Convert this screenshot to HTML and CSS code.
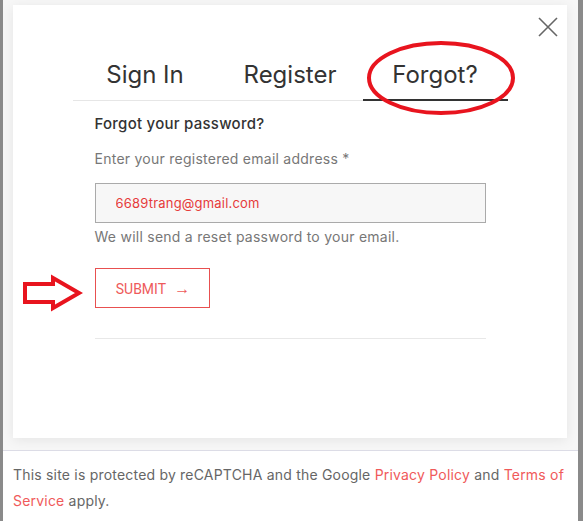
FILE: index.html
```html
<!DOCTYPE html>
<html lang="en">
<head>
  <meta charset="UTF-8">
  <meta name="viewport" content="width=device-width, initial-scale=1.0">
  <title>Forgot password</title>
  <link rel="stylesheet" href="styles.css">
</head>
<body>
  <div class="page">
    <div class="modal">
      <div class="modal-top">
        <button class="close" aria-label="Close">
          <svg width="20" height="20" viewBox="0 0 20 20"><path d="M1 1L19 19M19 1L1 19" stroke="#666" stroke-width="1.6" fill="none"/></svg>
        </button>
      </div>

      <div class="tabs">
        <div class="tab">Sign In</div>
        <div class="tab">Register</div>
        <div class="tab active">Forgot?</div>
      </div>

      <form class="forgot-form">
        <h2>Forgot your password?</h2>
        <label for="email">Enter your registered email address *</label>
        <input type="email" id="email" value="6689trang@gmail.com">
        <p class="hint">We will send a reset password to your email.</p>
        <button type="submit" class="submit">SUBMIT <span class="arrow">&rarr;</span></button>
        <div class="divider"></div>
      </form>
    </div>

    <div class="footer">
      <p>This site is protected by reCAPTCHA and the Google <a href="#">Privacy Policy</a> and <a href="#">Terms of Service</a> apply.</p>
    </div>
  </div>

  <!-- red annotations drawn over the screenshot -->
  <svg class="marks" width="583" height="521" viewBox="0 0 583 521">
    <ellipse cx="441" cy="78" rx="72" ry="35" fill="none" stroke="#e8141e" stroke-width="4"/>
    <polygon points="25,284 53,284 53,278 79,293 53,308 53,302 25,302" fill="none" stroke="#e8141e" stroke-width="4" stroke-linejoin="miter"/>
  </svg>
</body>
</html>
```

FILE: styles.css
```css
body {
  margin: 0;
  padding: 0;
  background-color: #8a8a8a;
  font-family: Inter, "Open Sans", sans-serif;
  position: relative;
  height: 521px;
  overflow: hidden;
}
.page {
  margin: 0 5px 0 3px;
  height: 521px;
  background-color: #f7f7f7;
  display: flex;
  flex-direction: column;
}
.modal {
  margin: 5px 11px 0 10px;
  height: 433px;
  background-color: #fff;
  box-shadow: 0 2px 12px rgba(0, 0, 0, 0.08);
  padding-top: 12px;
  box-sizing: border-box;
}
.modal-top {
  display: flex;
  justify-content: flex-end;
  padding-right: 9px;
  height: 20px;
}
.close {
  background: none;
  border: none;
  padding: 0;
  width: 20px;
  height: 20px;
  cursor: pointer;
}
.tabs {
  display: flex;
  width: 435px;
  margin: 20px auto 0;
  border-bottom: 1px solid #e6e6e6;
}
.tab {
  flex: 1;
  text-align: center;
  font-size: 24px;
  line-height: 32px;
  color: #333;
  padding: 2px 0 8px;
  border-bottom: 2px solid transparent;
  margin-bottom: -1px;
}
.tab.active {
  border-bottom-color: #333;
}
.forgot-form {
  width: 391px;
  margin: 0 auto;
  display: flex;
  flex-direction: column;
  align-items: flex-start;
  letter-spacing: 0.25px;
}
h2 {
  margin: 12px 0 0;
  font-size: 15px;
  font-weight: 500;
  line-height: 22px;
  color: #333;
}
label {
  margin-top: 13px;
  font-size: 14px;
  line-height: 22px;
  color: #777;
}
input {
  margin-top: 13px;
  width: 100%;
  height: 40px;
  box-sizing: border-box;
  border: 1px solid #aaa;
  background-color: #f7f7f7;
  padding: 0 20px;
  font-family: inherit;
  font-size: 13px;
  letter-spacing: 0.2px;
  color: #e63b3b;
}
.hint {
  margin: 3px 0 0;
  font-size: 14px;
  line-height: 22px;
  color: #777;
}
.submit {
  margin-top: 20px;
  height: 40px;
  width: 115px;
  background: #fff;
  border: 1px solid #e85050;
  color: #ee5a5a;
  font-family: Roboto, "Liberation Sans", sans-serif;
  font-size: 14px;
  letter-spacing: 0;
  cursor: pointer;
  padding: 0 0 0 2px;
}
.arrow {
  margin-left: 5px;
  font-size: 16px;
}
.divider {
  margin-top: 30px;
  width: 100%;
  border-top: 1px solid #e8e8e8;
}
.footer {
  margin-top: 12px;
  flex: 1;
  background-color: #fff;
  border-top: 1px solid #dcdce6;
  padding: 11px 10px 0;
  font-size: 14px;
  line-height: 26px;
  letter-spacing: 0.2px;
  color: #666;
}
.footer p {
  margin: 0;
}
.footer a {
  color: #f05a5a;
  text-decoration: none;
}
.marks {
  position: absolute;
  left: 0;
  top: 0;
  pointer-events: none;
}
```
